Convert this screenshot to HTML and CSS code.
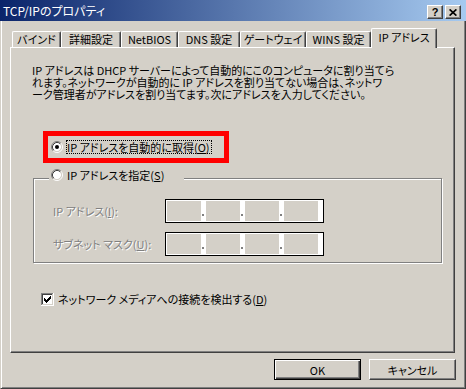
FILE: index.html
```html
<!DOCTYPE html>
<html lang="ja">
<head>
<meta charset="utf-8">
<title>TCP/IPのプロパティ</title>
<link rel="stylesheet" href="styles.css">
</head>
<body>
<div class="window">
  <div class="titlebar">
    <span class="title">TCP/IPのプロパティ</span>
    <div class="caption-btns">
      <span class="cbtn help">?</span>
      <span class="cbtn close"><svg width="8" height="7" viewBox="0 0 8 7"><path d="M0.6 0.4 L7.4 6.6 M7.4 0.4 L0.6 6.6" stroke="#000" stroke-width="1.7" fill="none"/></svg></span>
    </div>
  </div>
  <div class="frame">
    <div class="tabs">
      <div class="tab t1">バインド</div>
      <div class="tab t2">詳細設定</div>
      <div class="tab t3">NetBIOS</div>
      <div class="tab t4">DNS 設定</div>
      <div class="tab t5">ゲートウェイ</div>
      <div class="tab t6">WINS 設定</div>
      <div class="tab t7 selected">IP アドレス</div>
    </div>
    <div class="panel">
      <p class="desc">IP アドレスは DHCP サーバーによって自動的にこのコンピュータに割り当てら<br>れます。ネットワークが自動的に IP アドレスを割り当てない場合は、ネットワ<br>ーク管理者がアドレスを割り当てます。次にアドレスを入力してください。</p>
      <div class="highlight">
        <svg class="radio" width="12" height="12" viewBox="0 0 12 12">
          <circle cx="6" cy="6" r="4.2" fill="#fff"/>
          <path d="M2.11 9.89 A5.5 5.5 0 0 1 9.89 2.11" stroke="#808080" fill="none"/>
          <path d="M9.89 2.11 A5.5 5.5 0 0 1 2.11 9.89" stroke="#fff" fill="none"/>
          <path d="M2.82 9.18 A4.5 4.5 0 0 1 9.18 2.82" stroke="#404040" fill="none"/>
          <path d="M9.18 2.82 A4.5 4.5 0 0 1 2.82 9.18" stroke="#d4d0c8" fill="none"/>
          <circle cx="6" cy="6" r="2" fill="#000"/>
        </svg>
        <span class="focus">IP アドレスを自動的に取得(<u>O</u>)</span>
      </div>
      <div class="group">
        <div class="group-title">
          <svg class="radio" width="12" height="12" viewBox="0 0 12 12">
            <circle cx="6" cy="6" r="4.2" fill="#fff"/>
            <path d="M2.11 9.89 A5.5 5.5 0 0 1 9.89 2.11" stroke="#808080" fill="none"/>
            <path d="M9.89 2.11 A5.5 5.5 0 0 1 2.11 9.89" stroke="#fff" fill="none"/>
            <path d="M2.82 9.18 A4.5 4.5 0 0 1 9.18 2.82" stroke="#404040" fill="none"/>
            <path d="M9.18 2.82 A4.5 4.5 0 0 1 2.82 9.18" stroke="#d4d0c8" fill="none"/>
          </svg>
          <span class="gt-text">IP アドレスを指定(<u>S</u>)</span>
        </div>
        <div class="ip-row first">
          <span class="ip-label disabled">IP アドレス(<u>I</u>):</span>
          <div class="ipbox">
            <span class="oct"></span><span class="sep"></span>
            <span class="oct"></span><span class="sep"></span>
            <span class="oct"></span><span class="sep"></span>
            <span class="oct"></span>
          </div>
        </div>
        <div class="ip-row second">
          <span class="ip-label disabled">サブネット マスク(<u>U</u>):</span>
          <div class="ipbox">
            <span class="oct"></span><span class="sep"></span>
            <span class="oct"></span><span class="sep"></span>
            <span class="oct"></span><span class="sep"></span>
            <span class="oct"></span>
          </div>
        </div>
      </div>
      <div class="check-row">
        <svg class="check" width="13" height="13" viewBox="0 0 13 13" shape-rendering="crispEdges">
          <rect x="0" y="0" width="13" height="13" fill="#fff"/>
          <rect x="0" y="0" width="12" height="1" fill="#808080"/>
          <rect x="0" y="0" width="1" height="12" fill="#808080"/>
          <rect x="1" y="1" width="10" height="1" fill="#404040"/>
          <rect x="1" y="1" width="1" height="10" fill="#404040"/>
          <rect x="1" y="11" width="11" height="1" fill="#d4d0c8"/>
          <rect x="11" y="1" width="1" height="11" fill="#d4d0c8"/>
          <rect x="3" y="5" width="1" height="3" fill="#000"/>
          <rect x="4" y="6" width="1" height="3" fill="#000"/>
          <rect x="5" y="7" width="1" height="3" fill="#000"/>
          <rect x="6" y="6" width="1" height="3" fill="#000"/>
          <rect x="7" y="5" width="1" height="3" fill="#000"/>
          <rect x="8" y="4" width="1" height="3" fill="#000"/>
          <rect x="9" y="3" width="1" height="3" fill="#000"/>
        </svg>
        <span>ネットワーク メディアへの接続を検出する(<u>D</u>)</span>
      </div>
    </div>
    <div class="buttons">
      <div class="btn default">OK</div>
      <div class="btn">キャンセル</div>
    </div>
  </div>
</div>
</body>
</html>
```
FILE: styles.css
```css
html, body {
  margin: 0;
  padding: 0;
}
body {
  width: 466px;
  height: 389px;
  background: #d4d0c8;
  font-family: "Noto Sans CJK JP", "Noto Sans", sans-serif;
  font-size: 11px;
  font-feature-settings: "palt" 1;
  color: #000;
  overflow: hidden;
}
.window {
  width: 466px;
  height: 389px;
  display: flex;
  flex-direction: column;
}
.titlebar {
  height: 21px;
  flex: none;
  display: flex;
  align-items: flex-start;
  background: linear-gradient(to right, #0a246a, #a6caf0);
  color: #fff;
}
.title {
  margin: 4px 0 0 3px;
  font-size: 12px;
  line-height: 14px;
  white-space: nowrap;
}
.caption-btns {
  margin: 5px 5px 0 auto;
  display: flex;
  gap: 2px;
}
.cbtn {
  width: 16px;
  height: 14px;
  box-sizing: border-box;
  border: 1px solid;
  border-color: #fff #404040 #404040 #fff;
  box-shadow: inset -1px -1px #808080;
  background: #d4d0c8;
  color: #000;
  display: flex;
  align-items: center;
  justify-content: center;
}
.help {
  font-family: "Liberation Sans", sans-serif;
  font-weight: bold;
  font-size: 11px;
  line-height: 12px;
}
.frame {
  flex: 1;
  box-sizing: border-box;
  border-left: 1px solid #d4d0c8;
  border-right: 1px solid #404040;
  border-bottom: 1px solid #404040;
  box-shadow: inset 1px 0 #fff, inset -1px -1px #808080;
  padding: 7px 9px 0 9px;
}
.tabs {
  display: flex;
  align-items: flex-end;
  height: 19px;
  margin-left: 2px;
}
.tab {
  box-sizing: border-box;
  height: 16px;
  border-top: 1px solid #fff;
  border-left: 1px solid #fff;
  border-right: 1px solid #404040;
  border-radius: 2px 2px 0 0;
  box-shadow: inset -1px 0 #808080;
  text-align: center;
  line-height: 14px;
  white-space: nowrap;
  background: #d4d0c8;
}
.t1 { width: 49px; }
.t2 { width: 60px; }
.t3 { width: 57px; }
.t4 { width: 62px; }
.t5 { width: 66px; }
.t6 { width: 65px; }
.t7 { width: 66px; }
.tab.selected {
  height: 20px;
  margin-bottom: -1px;
  padding-top: 1px;
  position: relative;
  z-index: 1;
}
.panel {
  box-sizing: border-box;
  width: 445px;
  height: 306px;
  border-top: 1px solid #fff;
  border-left: 1px solid #fff;
  border-right: 1px solid #404040;
  border-bottom: 1px solid #404040;
  box-shadow: inset -1px -1px #808080;
  overflow: hidden;
}
.desc {
  margin: 16px 0 0 21px;
  line-height: 12px;
  white-space: nowrap;
}
.highlight {
  box-sizing: border-box;
  width: 186px;
  height: 32px;
  margin: 31px 0 0 32px;
  border: 5px solid #ff0000;
  padding-left: 3px;
  display: flex;
  align-items: center;
}
.radio {
  flex: none;
  display: block;
}
.highlight .radio {
  margin-right: 3px;
}
.focus {
  display: block;
  border: 1px dotted #000;
  padding: 0 1px 0 0;
  line-height: 12px;
  white-space: nowrap;
}
.group {
  box-sizing: border-box;
  width: 409px;
  margin: 15px 0 0 22px;
  border: 1px solid #808080;
  box-shadow: 1px 1px 0 #fff, inset 1px 1px 0 #fff;
  padding-bottom: 6px;
}
.group-title {
  box-sizing: border-box;
  width: 135px;
  height: 14px;
  margin: -11px 0 0 15px;
  padding-left: 2px;
  background: #d4d0c8;
  display: flex;
  align-items: center;
  line-height: 14px;
  white-space: nowrap;
}
.group-title .radio {
  margin-right: 4px;
}
.ip-row {
  display: flex;
  align-items: center;
  padding-left: 19px;
}
.ip-row.first {
  margin-top: 17px;
}
.ip-row.second {
  margin-top: 9px;
}
.ip-label {
  width: 112px;
  flex: none;
  white-space: nowrap;
}
.disabled {
  color: #808080;
  text-shadow: 1px 1px 0 #fff;
}
.ipbox {
  box-sizing: border-box;
  width: 159px;
  height: 24px;
  border: 1px solid #000;
  background: #fff;
  padding: 1px 5px 1px 1px;
  display: flex;
}
.oct {
  width: 34px;
  height: 20px;
  background: #d4d0c8;
}
.sep {
  width: 5px;
  height: 20px;
  display: flex;
  align-items: flex-end;
}
.sep::before {
  content: "";
  width: 2px;
  height: 2px;
  margin: 0 0 5px 1px;
  background: #808080;
}
.check-row {
  margin: 28px 0 0 30px;
  display: flex;
  align-items: center;
  gap: 4px;
  white-space: nowrap;
}
.check {
  display: block;
  flex: none;
}
.buttons {
  margin-top: 6px;
  display: flex;
  justify-content: flex-end;
  gap: 8px;
}
.btn {
  box-sizing: border-box;
  width: 87px;
  height: 21px;
  border: 1px solid;
  border-color: #fff #404040 #404040 #fff;
  box-shadow: inset -1px -1px #808080;
  display: flex;
  align-items: center;
  justify-content: center;
  line-height: 14px;
}
.btn.default {
  border-color: #000;
  box-shadow: inset 1px 1px #fff, inset -1px -1px #404040, inset -2px -2px #808080;
}
u {
  text-decoration: underline;
  text-underline-offset: 1px;
}
```
